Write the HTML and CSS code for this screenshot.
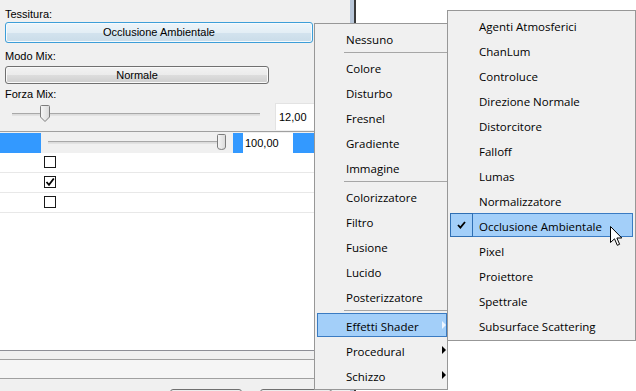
FILE: index.html
```html
<!DOCTYPE html>
<html lang="it">
<head>
    <meta charset="UTF-8">
    <title>Tessitura</title>
    <link rel="stylesheet" href="styles.css">
</head>
<body>
    <div class="screen">
        <div class="panel">
            <!-- Texture settings -->
            <div class="group">
                <div class="label">Tessitura:</div>
                <div class="btn btn-focus">Occlusione Ambientale</div>
                <div class="label label-mix">Modo Mix:</div>
                <div class="btn btn-mix">Normale</div>
                <div class="label label-force">Forza Mix:</div>
                <div class="slider-row">
                    <div class="slider">
                        <div class="track"></div>
                        <svg class="thumb" width="10" height="17" viewBox="0 0 10 17">
                            <defs>
                                <linearGradient id="tg" x1="0" x2="1">
                                    <stop offset="0" stop-color="#f7f7f7"/>
                                    <stop offset="1" stop-color="#d9d9d9"/>
                                </linearGradient>
                            </defs>
                            <path d="M0.5 1.5 Q0.5 0.5 1.5 0.5 H8.5 Q9.5 0.5 9.5 1.5 V12 L5 16.5 L0.5 12 Z" fill="url(#tg)" stroke="#7c7c7c"/>
                        </svg>
                    </div>
                    <div class="num">12,00</div>
                </div>
            </div>

            <!-- Property grid -->
            <div class="grid">
                <div class="row row-sel">
                    <div class="cell-blue"></div>
                    <div class="cell-slide">
                        <div class="track"></div>
                        <svg class="thumb-sm" width="9" height="16" viewBox="0 0 9 16">
                            <path d="M0.5 1.5 Q0.5 0.5 1.5 0.5 H7.5 Q8.5 0.5 8.5 1.5 V13 Q8.5 15.5 4.5 15.5 Q0.5 15.5 0.5 13 Z" fill="url(#tg)" stroke="#7c7c7c"/>
                        </svg>
                    </div>
                    <div class="cell-blue"></div>
                    <div class="cell-val">100,00</div>
                    <div class="cell-blue"></div>
                </div>
                <div class="row">
                    <div class="cb"></div>
                </div>
                <div class="row">
                    <div class="cb">
                        <svg width="10" height="10" viewBox="0 0 10 10">
                            <path d="M1.5 5 L4 7.8 L8.8 1.5" fill="none" stroke="#000" stroke-width="1.8"/>
                        </svg>
                    </div>
                </div>
                <div class="row">
                    <div class="cb"></div>
                </div>
            </div>

            <div class="status">
                <div class="tabs"></div>
                <div class="bar"></div>
                <div class="actions">
                    <div class="act"></div>
                    <div class="act"></div>
                </div>
            </div>
        </div>
        <div class="frame"></div>
        <div class="canvas"></div>

        <!-- Texture popup menu -->
        <ul class="menu menu-main">
            <li class="item">Nessuno</li>
            <li class="sep"></li>
            <li class="item">Colore</li>
            <li class="item">Disturbo</li>
            <li class="item">Fresnel</li>
            <li class="item">Gradiente</li>
            <li class="item">Immagine</li>
            <li class="sep"></li>
            <li class="item">Colorizzatore</li>
            <li class="item">Filtro</li>
            <li class="item">Fusione</li>
            <li class="item">Lucido</li>
            <li class="item">Posterizzatore</li>
            <li class="sep"></li>
            <li class="item active">Effetti Shader<span class="arrow"></span></li>
            <li class="item">Procedural<span class="arrow"></span></li>
            <li class="item">Schizzo<span class="arrow"></span></li>
        </ul>

        <ul class="menu menu-sub">
            <li class="item">Agenti Atmosferici</li>
            <li class="item">ChanLum</li>
            <li class="item">Controluce</li>
            <li class="item">Direzione Normale</li>
            <li class="item">Distorcitore</li>
            <li class="item">Falloff</li>
            <li class="item">Lumas</li>
            <li class="item">Normalizzatore</li>
            <li class="item active">
                <span class="check">
                    <svg width="9" height="8" viewBox="0 0 9 8">
                        <path d="M1 4 L3.4 6.6 L8 1" fill="none" stroke="#000" stroke-width="1.8"/>
                    </svg>
                </span>
                Occlusione Ambientale
            </li>
            <li class="item">Pixel</li>
            <li class="item">Proiettore</li>
            <li class="item">Spettrale</li>
            <li class="item">Subsurface Scattering</li>
        </ul>

        <svg class="cursor" width="13" height="21" viewBox="0 0 13 21">
            <path d="M0.5 0.5 V16.5 L4.5 12.8 L7.3 19.3 L9.6 18.3 L6.9 12 H11.8 Z" fill="#fff" stroke="#000" stroke-linejoin="miter"/>
        </svg>
    </div>
</body>
</html>
```

FILE: styles.css
```css
* {
    margin: 0;
    padding: 0;
    box-sizing: border-box;
}

body {
    width: 636px;
    height: 391px;
    overflow: hidden;
    background: #fff;
    font-family: "Liberation Sans", Arial, sans-serif;
    font-size: 11px;
    color: #000;
}

.screen {
    position: relative;
    display: flex;
    height: 391px;
}

/* Left settings panel */
.panel {
    width: 350px;
    background: #f0f0f0;
    display: flex;
    flex-direction: column;
}

.group {
    height: 132px;
    border-bottom: 1px solid #a0a0a0;
    padding: 7px 0 0 5px;
}

.label {
    height: 14px;
    line-height: 14px;
}

.label-mix {
    margin-top: 6px;
}

.label-force {
    margin-top: 3px;
}

.btn {
    text-align: center;
    border-radius: 3px;
}

.btn-focus {
    width: 308px;
    height: 21px;
    margin-top: 1px;
    line-height: 19px;
    border: 1px solid #3c9ed8;
    background: linear-gradient(#edf5fa, #e3eef5 50%, #d3e3ee 51%, #c9dce9);
    box-shadow: inset 0 0 0 1px #f6fafd;
}

.btn-mix {
    width: 264px;
    height: 18px;
    margin-top: 3px;
    line-height: 16px;
    border: 1px solid #707070;
    background: linear-gradient(#f2f2f2, #ebebeb 50%, #dddddd 51%, #cfcfcf);
    box-shadow: inset 0 0 0 1px #fafafa;
}

.slider-row {
    display: flex;
    height: 27px;
    margin-top: 2px;
}

.slider {
    position: relative;
    width: 248px;
    margin-left: 7px;
}

.track {
    height: 3px;
    border-top: 1px solid #a8a8a8;
    border-bottom: 1px solid #e2e2e2;
    background: #dcdcdc;
}

.slider .track {
    margin-top: 10px;
}

.thumb {
    position: absolute;
    left: 28px;
    top: 2px;
}

.num {
    width: 60px;
    margin-left: 15px;
    padding-left: 3px;
    line-height: 27px;
    background: #fff;
    border-top: 1px solid #e3e3e3;
    border-left: 1px solid #e3e3e3;
}

/* Property grid */
.grid {
    flex: 1;
    background: #fff;
    border-top: 1px solid #f0f0f0;
}

.row {
    display: grid;
    grid-template-columns: 41px 192px 10px 50px 1fr;
    height: 20px;
    border-bottom: 1px solid #e8e8e8;
}

.row-sel {
    border-bottom: 0;
}

.cell-blue {
    background: #3399ff;
}

.cell-slide {
    position: relative;
    background: #f0f0f0;
    padding: 8px 9px 0 7px;
}

.thumb-sm {
    position: absolute;
    left: 176px;
    top: 1px;
}

.cell-val {
    background: #fff;
    padding-left: 2px;
    line-height: 20px;
}

.cb {
    grid-column: 2;
    width: 12px;
    height: 12px;
    margin: 3px 0 0 3px;
    border: 1px solid #1a1a1a;
    background: #fff;
}

.cb svg {
    display: block;
}

/* Bottom strips */
.status {
    height: 41px;
    border-top: 1px solid #8d8e96;
}

.tabs {
    height: 8px;
}

.bar {
    height: 20px;
    border-top: 1px solid #a0a0a0;
    border-bottom: 1px solid #a0a0a0;
    background: #f5f5f5;
}

.actions {
    display: flex;
    gap: 18px;
    padding: 10px 0 0 170px;
}

.act {
    width: 72px;
    height: 20px;
    border: 1px solid #707070;
    border-radius: 3px;
    background: #ececec;
}

.frame {
    width: 7px;
    background: linear-gradient(90deg, #b9c7d9 0, #b9c7d9 4px, #3a3a3a 4px, #3a3a3a 6px, #fff 6px);
}

.canvas {
    flex: 1;
    background: #fff;
}

/* Popup menus */
.menu {
    position: absolute;
    list-style: none;
    background: #f0f0f0;
    border: 1px solid #979797;
    font-family: "Open Sans", sans-serif;
    font-size: 11.5px;
    color: #000;
}

.menu-main {
    left: 314px;
    top: 23px;
    width: 134px;
    padding: 2px 0 1px;
}

.menu-sub {
    left: 447px;
    top: 10px;
    width: 189px;
    padding: 2px 0;
}

.item {
    position: relative;
    display: flex;
    height: 24px;
    margin: 0 0 1px 2px;
    padding: 1px 0 0 28px;
    line-height: 24px;
    border: 1px solid transparent;
    white-space: nowrap;
}

.menu-sub .item {
    margin-right: 2px;
}

.item.active {
    background: #a3cff9;
    border-color: #3a7bc2;
}

/* top margin collapses with the item's 1px margin */
.sep {
    height: 1px;
    margin: 2px 0 2px 29px;
    background: #a6a6a6;
}

.arrow {
    align-self: center;
    margin: 0 0 1px auto;
    border-left: 4px solid #000;
    border-top: 4px solid transparent;
    border-bottom: 4px solid transparent;
}

.active .arrow {
    border-left-color: #eef6ff;
}

.check {
    position: absolute;
    left: -1px;
    top: -1px;
    width: 23px;
    height: 24px;
    border: 1px solid #2f6fb3;
    display: flex;
    align-items: center;
    justify-content: center;
}

.check svg {
    display: block;
}

.cursor {
    position: absolute;
    left: 610px;
    top: 226px;
}
```
